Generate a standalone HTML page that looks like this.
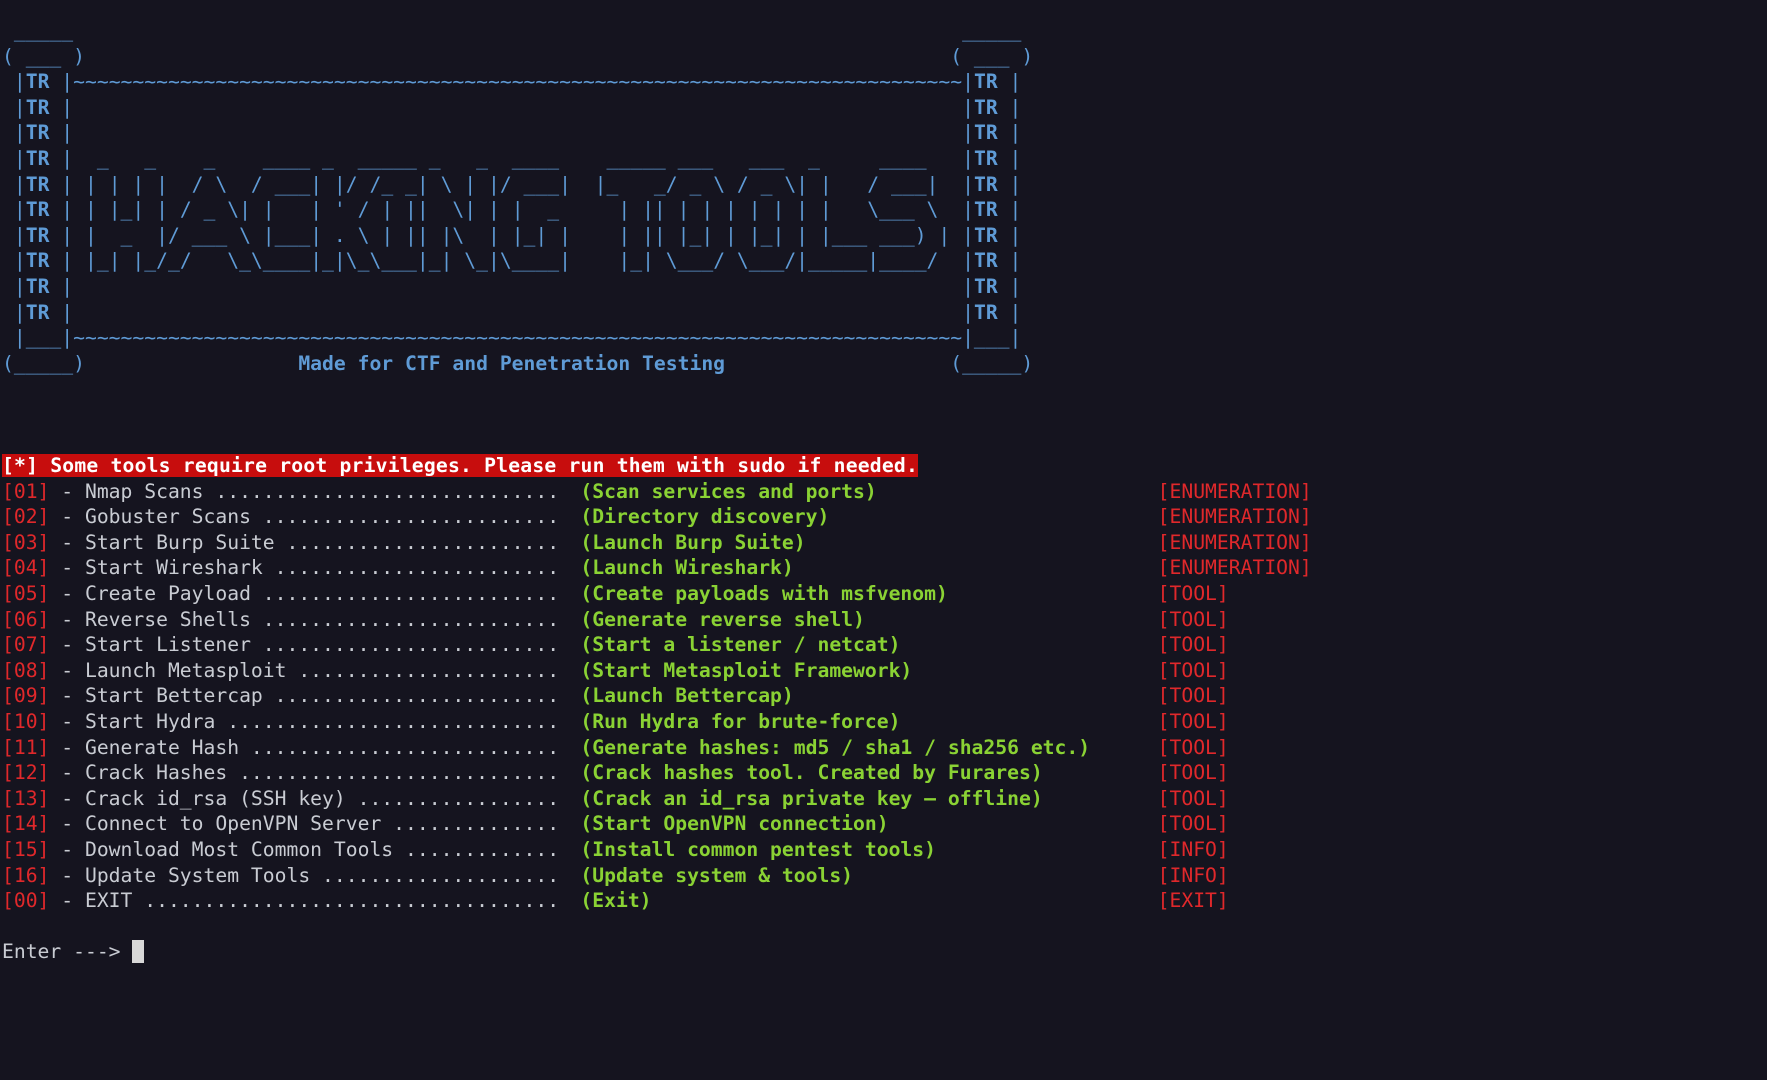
<!DOCTYPE html>
<html><head><meta charset="utf-8"><style>
html,body{margin:0;padding:0;background:#15141f;width:1767px;height:1080px;overflow:hidden}
.t{position:absolute;left:2px;top:18px;font-family:"DejaVu Sans Mono","Liberation Mono",monospace;font-size:19.7px;line-height:25.6px;color:#c9ccd3}
.p{white-space:pre}
.b{color:#5f9bd6}
.r{color:#e0282b}
.g{color:#8ad234;font-weight:bold}
.w{background:#c70d0d;color:#fff;font-weight:bold;letter-spacing:0.2px}
.row{position:relative;height:25.6px;white-space:pre}
.row>span{position:absolute;top:0}
.row>.g{left:48.8ch}
.row>.r{left:97.5ch}
.cur{display:inline-block;width:1ch;height:23px;background:#d8d8d8;vertical-align:-5px}
</style></head><body>
<div class="t"><div class="b p"> _____                                                                           _____ 
( ___ )                                                                         ( ___ )
 |<b>TR</b> |~~~~~~~~~~~~~~~~~~~~~~~~~~~~~~~~~~~~~~~~~~~~~~~~~~~~~~~~~~~~~~~~~~~~~~~~~~~|<b>TR</b> |
 |<b>TR</b> |                                                                           |<b>TR</b> |
 |<b>TR</b> |                                                                           |<b>TR</b> |
 |<b>TR</b> |  _   _    _    ____ _  _____ _   _  ____    _____ ___   ___  _     ____   |<b>TR</b> |
 |<b>TR</b> | | | | |  / \  / ___| |/ /_ _| \ | |/ ___|  |_   _/ _ \ / _ \| |   / ___|  |<b>TR</b> |
 |<b>TR</b> | | |_| | / _ \| |   | ' / | ||  \| | |  _     | || | | | | | | |   \___ \  |<b>TR</b> |
 |<b>TR</b> | |  _  |/ ___ \ |___| . \ | || |\  | |_| |    | || |_| | |_| | |___ ___) | |<b>TR</b> |
 |<b>TR</b> | |_| |_/_/   \_\____|_|\_\___|_| \_|\____|    |_| \___/ \___/|_____|____/  |<b>TR</b> |
 |<b>TR</b> |                                                                           |<b>TR</b> |
 |<b>TR</b> |                                                                           |<b>TR</b> |
 |___|~~~~~~~~~~~~~~~~~~~~~~~~~~~~~~~~~~~~~~~~~~~~~~~~~~~~~~~~~~~~~~~~~~~~~~~~~~~|___|
(_____)                  <b>Made for CTF and Penetration Testing</b>                   (_____)
</div><div class="p"> 
 
 
</div><div class="p"><span class="w">[*] Some tools require root privileges. Please run them with sudo if needed.</span></div><div class="row"><span><span class="r">[01]</span> - Nmap Scans .............................</span><span class="g">(Scan services and ports)</span><span class="r">[ENUMERATION]</span></div><div class="row"><span><span class="r">[02]</span> - Gobuster Scans .........................</span><span class="g">(Directory discovery)</span><span class="r">[ENUMERATION]</span></div><div class="row"><span><span class="r">[03]</span> - Start Burp Suite .......................</span><span class="g">(Launch Burp Suite)</span><span class="r">[ENUMERATION]</span></div><div class="row"><span><span class="r">[04]</span> - Start Wireshark ........................</span><span class="g">(Launch Wireshark)</span><span class="r">[ENUMERATION]</span></div><div class="row"><span><span class="r">[05]</span> - Create Payload .........................</span><span class="g">(Create payloads with msfvenom)</span><span class="r">[TOOL]</span></div><div class="row"><span><span class="r">[06]</span> - Reverse Shells .........................</span><span class="g">(Generate reverse shell)</span><span class="r">[TOOL]</span></div><div class="row"><span><span class="r">[07]</span> - Start Listener .........................</span><span class="g">(Start a listener / netcat)</span><span class="r">[TOOL]</span></div><div class="row"><span><span class="r">[08]</span> - Launch Metasploit ......................</span><span class="g">(Start Metasploit Framework)</span><span class="r">[TOOL]</span></div><div class="row"><span><span class="r">[09]</span> - Start Bettercap ........................</span><span class="g">(Launch Bettercap)</span><span class="r">[TOOL]</span></div><div class="row"><span><span class="r">[10]</span> - Start Hydra ............................</span><span class="g">(Run Hydra for brute-force)</span><span class="r">[TOOL]</span></div><div class="row"><span><span class="r">[11]</span> - Generate Hash ..........................</span><span class="g">(Generate hashes: md5 / sha1 / sha256 etc.)</span><span class="r">[TOOL]</span></div><div class="row"><span><span class="r">[12]</span> - Crack Hashes ...........................</span><span class="g">(Crack hashes tool. Created by Furares)</span><span class="r">[TOOL]</span></div><div class="row"><span><span class="r">[13]</span> - Crack id_rsa (SSH key) .................</span><span class="g">(Crack an id_rsa private key – offline)</span><span class="r">[TOOL]</span></div><div class="row"><span><span class="r">[14]</span> - Connect to OpenVPN Server ..............</span><span class="g">(Start OpenVPN connection)</span><span class="r">[TOOL]</span></div><div class="row"><span><span class="r">[15]</span> - Download Most Common Tools .............</span><span class="g">(Install common pentest tools)</span><span class="r">[INFO]</span></div><div class="row"><span><span class="r">[16]</span> - Update System Tools ....................</span><span class="g">(Update system &amp; tools)</span><span class="r">[INFO]</span></div><div class="row"><span><span class="r">[00]</span> - EXIT ...................................</span><span class="g">(Exit)</span><span class="r">[EXIT]</span></div><div class="p"> 
Enter ---> <span class="cur"></span></div></div>
</body></html>
